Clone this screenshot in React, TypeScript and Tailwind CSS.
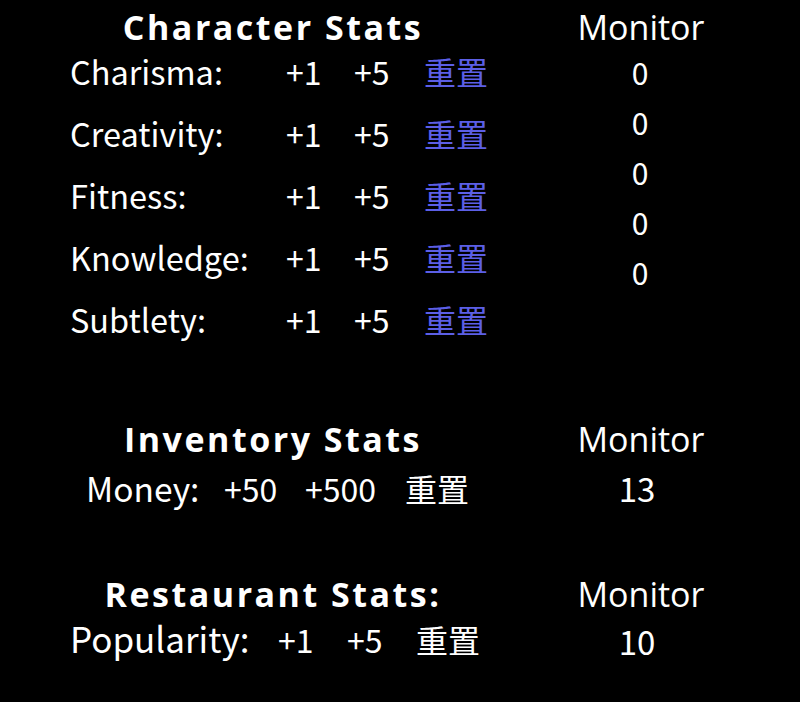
const FONT = "font-['Noto_Sans_CJK_SC','Noto_Sans',sans-serif]";

const characterStats = ['Charisma:', 'Creativity:', 'Fitness:', 'Knowledge:', 'Subtlety:'];

function Heading({ children }: { children: React.ReactNode }) {
  return (
    <div className="h-[40px] text-center font-['Open_Sans',sans-serif] text-[34px] leading-[40px] font-bold tracking-[2.5px]">
      {children}
    </div>
  );
}

function MonitorLabel() {
  return (
    <div className="h-[40px] text-center font-['Open_Sans',sans-serif] text-[34px] leading-[40px]">Monitor</div>
  );
}

export default function App() {
  return (
    <div className={`min-h-[702px] w-[800px] bg-black text-white ${FONT}`}>
      {/* character */}
      <div className="flex pt-[7px]">
        <div className="w-[546px]">
          <Heading>Character Stats</Heading>
          <div className="flex flex-col gap-[14px] pl-[70px]">
            {characterStats.map((s) => (
              <div key={s} className="flex h-[48px] items-center text-[32px] leading-[48px]">
                <span className="w-[216px] text-[32.5px]">{s}</span>
                <span className="w-[68px]">+1</span>
                <span className="w-[70px]">+5</span>
                <span className="text-[#5c5fe6]">重置</span>
              </div>
            ))}
          </div>
        </div>
        <div className="w-[190px]">
          <MonitorLabel />
          {characterStats.map((s) => (
            <div key={s} className="h-[50px] pr-[2px] text-center text-[30px] leading-[50px]">0</div>
          ))}
        </div>
      </div>

      {/* inventory */}
      <div className="mt-[76px] flex">
        <div className="w-[546px]">
          <Heading>Inventory Stats</Heading>
          <div className="mt-[5px] flex h-[48px] items-center pl-[86px] text-[32px] leading-[48px]">
            <span className="w-[138px] text-[33.5px]">Money:</span>
            <span className="w-[81px]">+50</span>
            <span className="w-[100px]">+500</span>
            <span>重置</span>
          </div>
        </div>
        <div className="w-[190px]">
          <MonitorLabel />
          <div className="mt-[5px] h-[48px] pr-[8px] text-center text-[33px] leading-[48px]">13</div>
        </div>
      </div>

      {/* restaurant */}
      <div className="mt-[62px] flex">
        <div className="w-[546px]">
          <Heading>Restaurant Stats:</Heading>
          <div className="flex h-[48px] items-baseline pl-[70px] text-[32px] leading-[48px]">
            <span className="w-[208px] text-[35px]">Popularity:</span>
            <span className="w-[69px]">+1</span>
            <span className="w-[69px]">+5</span>
            <span>重置</span>
          </div>
        </div>
        <div className="w-[190px]">
          <MonitorLabel />
          <div className="mt-[3px] h-[48px] pr-[8px] text-center text-[33px] leading-[48px]">10</div>
        </div>
      </div>
    </div>
  );
}
